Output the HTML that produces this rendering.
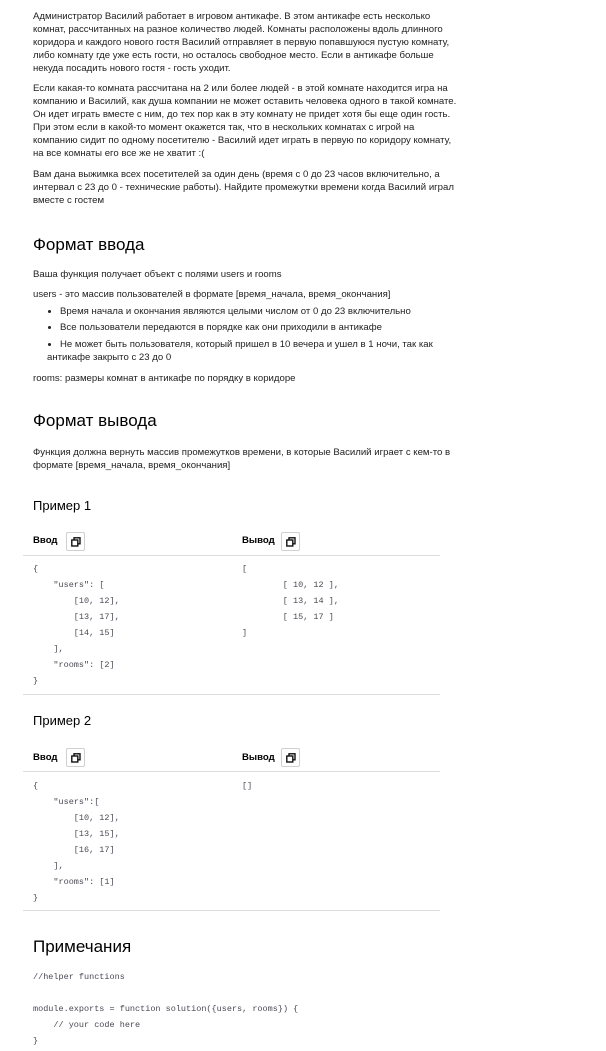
<!DOCTYPE html>
<html><head><meta charset="utf-8"><style>
body{margin:0;width:606px;height:1051px;background:#fff;position:relative;overflow:hidden;font-family:"Liberation Sans",Arial,sans-serif;color:#222}
.t{position:absolute;left:33px;font-size:9.6px;line-height:13px;white-space:nowrap}
.h{position:absolute;left:33px;font-size:17px;line-height:20px;color:#000;white-space:nowrap}
.h2{position:absolute;left:33px;font-size:13px;line-height:16px;color:#000}
.c{position:absolute;font-family:"Liberation Mono",monospace;font-size:8.5px;line-height:16px;white-space:pre;color:#4a4a55}
.lbl{position:absolute;font-size:9.6px;font-weight:bold;color:#000;line-height:12px}
.btn{position:absolute;width:17px;height:17px;border:1px solid #d0d0d0;border-radius:2px;background:#fff}
.btn svg{position:absolute;left:4px;top:4px}
.line{position:absolute;left:23px;width:417px;height:1px;background:#ddd}
.dot{position:absolute;left:48px;width:3px;height:3px;border-radius:50%;background:#222}
</style></head><body>
<div class="t" style="top:10px">Администратор Василий работает в игровом антикафе. В этом антикафе есть несколько<br>комнат, рассчитанных на разное количество людей. Комнаты расположены вдоль длинного<br>коридора и каждого нового гостя Василий отправляет в первую попавшуюся пустую комнату,<br>либо комнату где уже есть гости, но осталось свободное место. Если в антикафе больше<br>некуда посадить нового гостя - гость уходит.</div>
<div class="t" style="top:82px">Если какая-то комната рассчитана на 2 или более людей - в этой комнате находится игра на<br>компанию и Василий, как душа компании не может оставить человека одного в такой комнате.<br>Он идет играть вместе с ним, до тех пор как в эту комнату не придет хотя бы еще один гость.<br>При этом если в какой-то момент окажется так, что в нескольких комнатах с игрой на<br>компанию сидит по одному посетителю - Василий идет играть в первую по коридору комнату,<br>на все комнаты его все же не хватит :(</div>
<div class="t" style="top:168px">Вам дана выжимка всех посетителей за один день (время с 0 до 23 часов включительно, а<br>интервал с 23 до 0 - технические работы). Найдите промежутки времени когда Василий играл<br>вместе с гостем</div>

<div class="h" style="top:235px">Формат ввода</div>
<div class="t" style="top:268px">Ваша функция получает объект с полями users и rooms</div>
<div class="t" style="top:288px">users - это массив пользователей в формате [время_начала, время_окончания]</div>
<div class="dot" style="top:310px"></div><div class="t" style="top:305px;left:60px">Время начала и окончания являются целыми числом от 0 до 23 включительно</div>
<div class="dot" style="top:326px"></div><div class="t" style="top:321px;left:60px">Все пользователи передаются в порядке как они приходили в антикафе</div>
<div class="dot" style="top:343px"></div><div class="t" style="top:338px;left:60px">Не может быть пользователя, который пришел в 10 вечера и ушел в 1 ночи, так как</div>
<div class="t" style="top:351px;left:47px">антикафе закрыто с 23 до 0</div>
<div class="t" style="top:372px">rooms: размеры комнат в антикафе по порядку в коридоре</div>

<div class="h" style="top:411px">Формат вывода</div>
<div class="t" style="top:446px">Функция должна вернуть массив промежутков времени, в которые Василий играет с кем-то в<br>формате [время_начала, время_окончания]</div>

<div class="h2" style="top:498px">Пример 1</div>
<div class="lbl" style="left:33px;top:535px">Ввод</div>
<div class="btn" style="left:66px;top:532px"><svg width="10" height="10" viewBox="0 0 10 10"><rect x="3" y="0.8" width="6" height="6" fill="none" stroke="#111" stroke-width="1.4"/><rect x="0.8" y="3" width="6" height="6" fill="#fff" stroke="#111" stroke-width="1.4"/></svg></div>
<div class="lbl" style="left:242px;top:535px">Вывод</div>
<div class="btn" style="left:281px;top:532px"><svg width="10" height="10" viewBox="0 0 10 10"><rect x="3" y="0.8" width="6" height="6" fill="none" stroke="#111" stroke-width="1.4"/><rect x="0.8" y="3" width="6" height="6" fill="#fff" stroke="#111" stroke-width="1.4"/></svg></div>
<div class="line" style="top:555px"></div>
<div class="c" style="left:33px;top:561px">{
    "users": [
        [10, 12],
        [13, 17],
        [14, 15]
    ],
    "rooms": [2]
}</div>
<div class="c" style="left:242px;top:561px">[
        [ 10, 12 ],
        [ 13, 14 ],
        [ 15, 17 ]
]</div>
<div class="line" style="top:694px"></div>

<div class="h2" style="top:713px">Пример 2</div>
<div class="lbl" style="left:33px;top:752px">Ввод</div>
<div class="btn" style="left:66px;top:748px"><svg width="10" height="10" viewBox="0 0 10 10"><rect x="3" y="0.8" width="6" height="6" fill="none" stroke="#111" stroke-width="1.4"/><rect x="0.8" y="3" width="6" height="6" fill="#fff" stroke="#111" stroke-width="1.4"/></svg></div>
<div class="lbl" style="left:242px;top:752px">Вывод</div>
<div class="btn" style="left:281px;top:748px"><svg width="10" height="10" viewBox="0 0 10 10"><rect x="3" y="0.8" width="6" height="6" fill="none" stroke="#111" stroke-width="1.4"/><rect x="0.8" y="3" width="6" height="6" fill="#fff" stroke="#111" stroke-width="1.4"/></svg></div>
<div class="line" style="top:771px"></div>
<div class="c" style="left:33px;top:778px">{
    "users":[
        [10, 12],
        [13, 15],
        [16, 17]
    ],
    "rooms": [1]
}</div>
<div class="c" style="left:242px;top:778px">[]</div>
<div class="line" style="top:910px"></div>

<div class="h" style="top:937px">Примечания</div>
<div class="c" style="left:33px;top:969px">//helper functions

module.exports = function solution({users, rooms}) {
    // your code here
}</div>
</body></html>
